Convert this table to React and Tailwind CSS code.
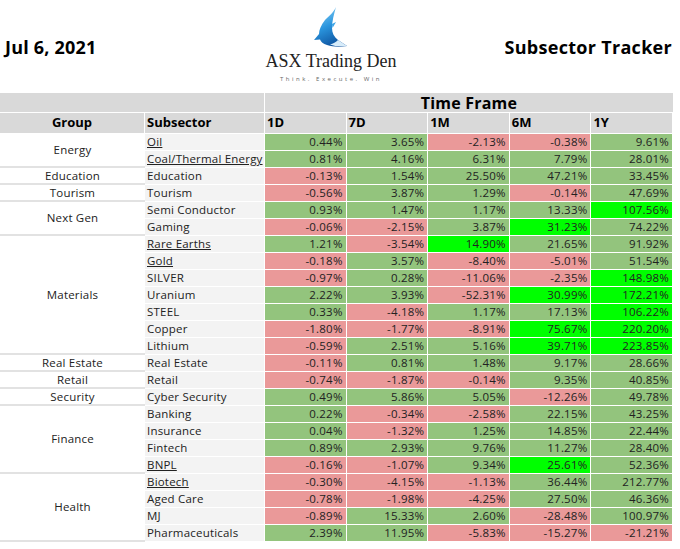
const GREEN = 'bg-[#93c47d]';
const RED = 'bg-[#ea9999]';
const BRIGHT = 'bg-[#00ff00]';

// value strings; trailing "*" marks a highlighted cell
const groups = [
  {
    name: 'Energy',
    span: 'row-span-2',
    rows: [
      ['Oil', true, ['0.44', '3.65', '-2.13', '-0.38', '9.61']],
      ['Coal/Thermal Energy', true, ['0.81', '4.16', '6.31', '7.79', '28.01']],
    ],
  },
  {
    name: 'Education',
    span: 'row-span-1',
    rows: [['Education', false, ['-0.13', '1.54', '25.50', '47.21', '33.45']]],
  },
  {
    name: 'Tourism',
    span: 'row-span-1',
    rows: [['Tourism', false, ['-0.56', '3.87', '1.29', '-0.14', '47.69']]],
  },
  {
    name: 'Next Gen',
    span: 'row-span-2',
    rows: [
      ['Semi Conductor', false, ['0.93', '1.47', '1.17', '13.33', '107.56*']],
      ['Gaming', false, ['-0.06', '-2.15', '3.87', '31.23*', '74.22']],
    ],
  },
  {
    name: 'Materials',
    span: 'row-span-7',
    rows: [
      ['Rare Earths', true, ['1.21', '-3.54', '14.90*', '21.65', '91.92']],
      ['Gold', true, ['-0.18', '3.57', '-8.40', '-5.01', '51.54']],
      ['SILVER', false, ['-0.97', '0.28', '-11.06', '-2.35', '148.98*']],
      ['Uranium', false, ['2.22', '3.93', '-52.31', '30.99*', '172.21*']],
      ['STEEL', false, ['0.33', '-4.18', '1.17', '17.13', '106.22*']],
      ['Copper', false, ['-1.80', '-1.77', '-8.91', '75.67*', '220.20*']],
      ['Lithium', false, ['-0.59', '2.51', '5.16', '39.71*', '223.85*']],
    ],
  },
  {
    name: 'Real Estate',
    span: 'row-span-1',
    rows: [['Real Estate', false, ['-0.11', '0.81', '1.48', '9.17', '28.66']]],
  },
  {
    name: 'Retail',
    span: 'row-span-1',
    rows: [['Retail', false, ['-0.74', '-1.87', '-0.14', '9.35', '40.85']]],
  },
  {
    name: 'Security',
    span: 'row-span-1',
    rows: [['Cyber Security', false, ['0.49', '5.86', '5.05', '-12.26', '49.78']]],
  },
  {
    name: 'Finance',
    span: 'row-span-4',
    rows: [
      ['Banking', false, ['0.22', '-0.34', '-2.58', '22.15', '43.25']],
      ['Insurance', false, ['0.04', '-1.32', '1.25', '14.85', '22.44']],
      ['Fintech', false, ['0.89', '2.93', '9.76', '11.27', '28.40']],
      ['BNPL', true, ['-0.16', '-1.07', '9.34', '25.61*', '52.36']],
    ],
  },
  {
    name: 'Health',
    span: 'row-span-4',
    rows: [
      ['Biotech', true, ['-0.30', '-4.15', '-1.13', '36.44', '212.77']],
      ['Aged Care', false, ['-0.78', '-1.98', '-4.25', '27.50', '46.36']],
      ['MJ', false, ['-0.89', '15.33', '2.60', '-28.48', '100.97']],
      ['Pharmaceuticals', false, ['2.39', '11.95', '-5.83', '-15.27', '-21.21']],
    ],
  },
];

const Shark = () => (
  <svg width="40" height="44" viewBox="4 4 40 44">
    <defs>
      <linearGradient id="sk" x1="0.3" y1="0" x2="0.7" y2="1">
        <stop offset="0" stopColor="#7fcbf3" />
        <stop offset="0.45" stopColor="#2a95de" />
        <stop offset="1" stopColor="#0b4c98" />
      </linearGradient>
    </defs>
    {/* body diving down, snout turning right */}
    <path
      d="M29 4 C27 9 22 13 18 17 C14 22 12 27 12 31 L7 37 L13 36.5 C14 39 16 41 20 42 C26 44 33 44 40 43 C37 41 34 39 31 37 C27 34 25 30 25 25 C25 18 27 11 29 4 Z"
      fill="url(#sk)"
    />
    {/* dorsal fin */}
    <path d="M25 21 L29 19 L25.5 25 Z" fill="#3aa3e6" />
    {/* pale belly */}
    <path d="M31 37 C34 39 37 41 40 43 C34 43.5 28 43.5 23 41.5 C26 40.5 29 39 31 37 Z" fill="#d7ecfa" />
  </svg>
);

const ValueCell = ({ v }) => {
  const bright = v.endsWith('*');
  const num = v.replace('*', '');
  const bg = bright ? BRIGHT : num.startsWith('-') ? RED : GREEN;
  return (
    <div className={`${bg} border-b border-r border-white flex items-center justify-end pr-[3px] text-[11.5px] tracking-[0.2px] text-[#222]`}>
      {num}%
    </div>
  );
};

const Row = ({ group, row }) => {
  const [name, link, vals] = row;
  return (
    <>
      {group && (
        <div className={`${group.span} col-start-1 bg-white border-b-2 border-[#e2e2e2] flex items-center justify-center text-[11.5px] tracking-[0.2px] text-[#222]`}>
          {group.name}
        </div>
      )}
      <div className="col-start-2 bg-[#f3f3f3] border-b border-r border-white flex items-center pl-[2px] text-[11.5px] tracking-[0.2px] text-[#222] whitespace-nowrap">
        <span className={link ? 'underline underline-offset-1' : ''}>{name}</span>
      </div>
      {vals.map((v, i) => (
        <ValueCell key={i} v={v} />
      ))}
    </>
  );
};

export default function App() {
  return (
    <div className="w-[680px] h-[549px] bg-white overflow-hidden" style={{ fontFamily: '"Open Sans", "DejaVu Sans", sans-serif' }}>
      <header className="h-[93px] grid grid-cols-[1fr_auto_1fr] items-start px-[5px]">
        <div className="mt-[34px] text-[18px] font-bold text-black tracking-[0.2px]">Jul 6, 2021</div>
        <div className="flex flex-col items-center mr-[18px] pt-[7px]">
          <Shark />
          <div className="text-[18px] leading-[20px] text-[#222]" style={{ fontFamily: '"Liberation Serif", "DejaVu Serif", serif' }}>
            ASX Trading Den
          </div>
          <div className="text-[6px] tracking-[0.42em] text-[#666] mt-[4px]">Think. Execute. Win</div>
        </div>
        <div className="mt-[34px] text-[18px] font-bold text-black tracking-[0.3px] text-right pr-[3px]">Subsector Tracker</div>
      </header>

      <div className="grid grid-cols-[145px_120px_repeat(5,81.6px)] grid-rows-[20px_21px] auto-rows-[17px] w-[673px]">
        <div className="col-span-2 bg-[#d9d9d9] border-b border-r border-white" />
        <div className="col-span-5 bg-[#d9d9d9] border-b border-white flex items-center justify-center text-[16px] font-bold text-black tracking-[0.2px]">
          Time Frame
        </div>

        <div className="bg-[#d9d9d9] border-b border-r border-white flex items-center justify-center text-[13px] font-bold text-black">Group</div>
        <div className="bg-[#d9d9d9] border-b border-r border-white flex items-center pl-[2px] text-[13px] font-bold text-black">Subsector</div>
        {['1D', '7D', '1M', '6M', '1Y'].map((h) => (
          <div key={h} className="bg-[#d9d9d9] border-b border-r border-white flex items-center pl-[2px] text-[13px] font-bold text-black">
            {h}
          </div>
        ))}

        {groups.map((g, gi) =>
          g.rows.map((r, ri) => (
            <Row key={`${gi}-${ri}`} group={ri === 0 ? g : null} row={r} />
          ))
        )}
      </div>
    </div>
  );
}
